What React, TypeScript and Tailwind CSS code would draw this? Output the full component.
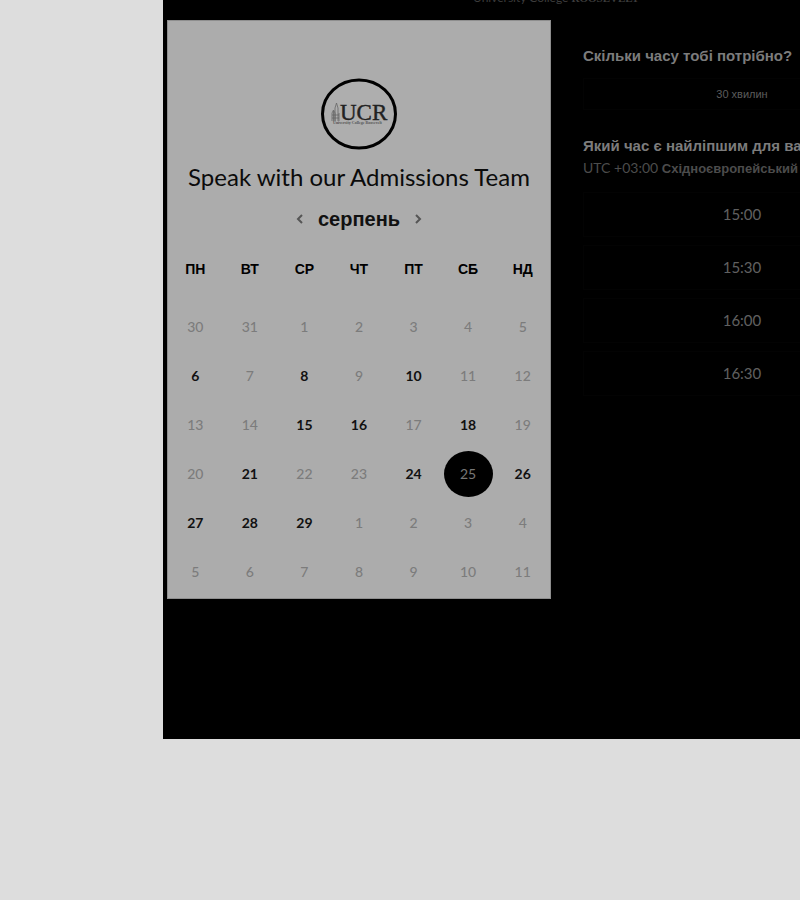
import { useState } from "react";

const weekdays = ["ПН", "ВТ", "СР", "ЧТ", "ПТ", "СБ", "НД"];

const weeks = [
  [30, 31, 1, 2, 3, 4, 5],
  [6, 7, 8, 9, 10, 11, 12],
  [13, 14, 15, 16, 17, 18, 19],
  [20, 21, 22, 23, 24, 25, 26],
  [27, 28, 29, 1, 2, 3, 4],
  [5, 6, 7, 8, 9, 10, 11],
];

// Open days, as "week-day" indexes into the table above.
const openDays = new Set([
  "1-0", "1-2", "1-4",
  "2-2", "2-3", "2-5",
  "3-1", "3-4", "3-5", "3-6",
  "4-0", "4-1", "4-2",
]);

const times = ["15:00", "15:30", "16:00", "16:30"];

const sans = "font-['Liberation_Sans',sans-serif]";
const lato = "font-['Lato',sans-serif]";

function Logo() {
  return (
    <svg width="78" height="74" viewBox="0 0 78 74" role="img" aria-label="University College Roosevelt">
      <ellipse cx="39" cy="37" rx="36.5" ry="34" fill="#aeaeae" stroke="#000" strokeWidth="3" />
      <g fill="none" stroke="#666" strokeWidth="0.8">
        <path d="M12 44V36l1.500-3 1.500 3v8M15 44V31l1.500-5 1.500 5v13M12 38h7M12 41h7M13.500 34v10M19 36v8" />
      </g>
      <text x="20" y="43" fontFamily="'Liberation Serif', serif" fontSize="23" fill="#222" stroke="#222" strokeWidth="0.4">
        UCR
      </text>
      <text x="13" y="47" fontFamily="'Liberation Serif', serif" fontSize="4" fontWeight="700" fill="#555">
        University College Roosevelt
      </text>
    </svg>
  );
}

function Chevron({ d }: { d: string }) {
  return (
    <svg width="10" height="12" viewBox="0 0 10 12" fill="none" stroke="#555" strokeWidth="2" aria-hidden="true">
      <path d={d} />
    </svg>
  );
}

export default function App() {
  const [selected, setSelected] = useState("3-5");
  return (
    <div className="min-h-screen overflow-hidden bg-[#dddddd] pb-40">
      <main className="ml-[163px] overflow-hidden bg-black pb-[140px]">
        <header className="flex h-5 items-end justify-center overflow-hidden pb-3 pl-[149px] text-[#3c3c3c]">
          <p className={`text-xs leading-5 whitespace-nowrap ${lato}`}>
            University College{" "}
            <span className="font-['Liberation_Serif',serif] text-[11px] font-bold">ROOSEVELT</span>
          </p>
        </header>
        <div className="flex pl-1">
          <section className="w-96 shrink-0 border border-[#8e8e8e] bg-[#acacac] pb-0.5">
            <div className="flex justify-center pt-14">
              <Logo />
            </div>
            <h1 className={`mt-2.5 text-center text-2xl leading-8 whitespace-nowrap text-[#0b0b0b] ${lato}`}>
              Speak with our Admissions Team
            </h1>
            <div className="mt-2.5 flex h-8 items-center justify-center gap-3">
              <button type="button" aria-label="Попередній місяць" className="p-0.5">
                <Chevron d="M8 2L4 6l4 4" />
              </button>
              <h2 className={`text-xl font-bold text-[#111] ${sans}`}>серпень</h2>
              <button type="button" aria-label="Наступний місяць" className="p-0.5">
                <Chevron d="M2 2l4 4-4 4" />
              </button>
            </div>
            <table className="w-full table-fixed border-collapse text-center">
              <thead>
                <tr className="h-[67px]">
                  {weekdays.map((d) => (
                    <th key={d} scope="col" className={`p-0 text-sm font-bold text-black ${sans}`}>
                      {d}
                    </th>
                  ))}
                </tr>
              </thead>
              <tbody>
                {weeks.map((week, w) => (
                  <tr key={w} className="h-[49px]">
                    {week.map((day, d) => {
                      const key = `${w}-${d}`;
                      const open = openDays.has(key);
                      const tone =
                        key === selected
                          ? "h-[46px] bg-black text-[#777]"
                          : open
                            ? "h-8 font-bold text-[#111]"
                            : "h-8 font-medium text-[#7c7c7c]";
                      return (
                        <td key={key} className="p-0">
                          <button
                            type="button"
                            disabled={!open}
                            onClick={() => setSelected(key)}
                            className={`mx-auto block w-[49px] rounded-[50%] text-sm ${lato} ${tone}`}
                          >
                            {day}
                          </button>
                        </td>
                      );
                    })}
                  </tr>
                ))}
              </tbody>
            </table>
          </section>
          <section className="w-[350px] shrink-0 pt-6 pl-8 whitespace-nowrap">
            <h2 className={`text-[15px] leading-6 font-bold text-[#7c7c7c] ${sans}`}>
              Скільки часу тобі потрібно?
            </h2>
            <button
              type="button"
              className={`mt-2.5 block h-8 w-full border border-[#030303] text-[11px] text-[#5c5c5c] ${sans}`}
            >
              30 хвилин
            </button>
            <h2 className={`mt-6 text-[15px] leading-6 font-bold text-[#7c7c7c] ${sans}`}>
              Який час є найліпшим для вас?
            </h2>
            <p className="text-sm leading-5 text-[#4c4c4c]">
              <span className={lato}>UTC +03:00</span>{" "}
              <span className={`text-[13px] font-bold ${sans}`}>Східноєвропейський час</span>
            </p>
            <div className="mt-[13px] grid gap-2">
              {times.map((t) => (
                <button
                  key={t}
                  type="button"
                  className={`h-[45px] w-full border border-[#030303] text-[15px] text-[#606060] ${lato}`}
                >
                  {t}
                </button>
              ))}
            </div>
          </section>
        </div>
      </main>
    </div>
  );
}
